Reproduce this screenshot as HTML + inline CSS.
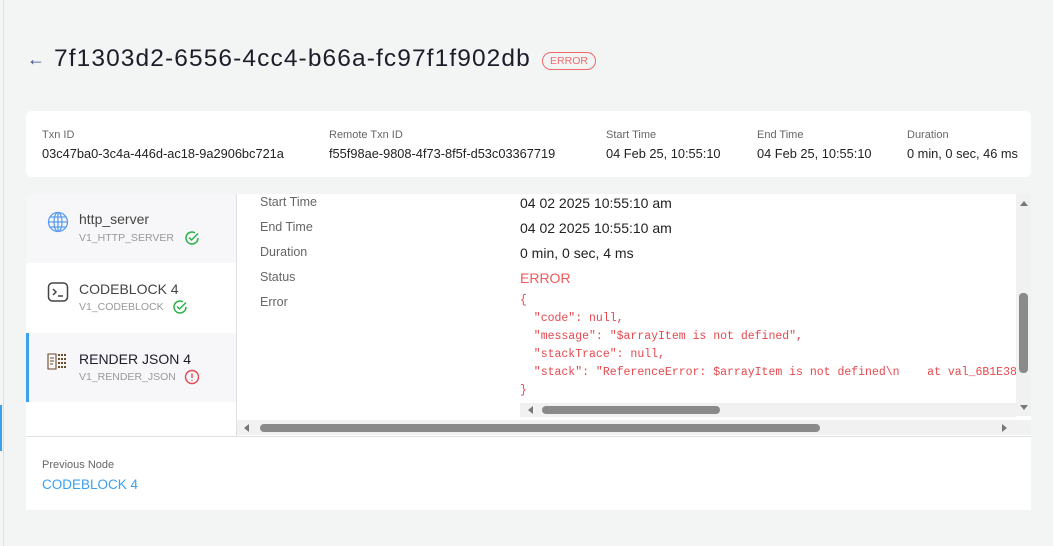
<!DOCTYPE html>
<html><head><style>
*{box-sizing:border-box;margin:0;padding:0}
body{width:1053px;height:546px;background:#f3f4f4;font-family:"Liberation Sans",sans-serif;position:relative;overflow:hidden;color:#222}
.abs{position:absolute}
.lbl{font-size:11px;color:#666}
.val{font-size:12.8px;color:#222}
.mono{font-family:"Liberation Mono",monospace;font-size:11.5px;color:#e5484d;white-space:pre;line-height:18px}
</style></head><body>
<div class="abs" style="left:0;top:0;width:4px;height:546px;border-right:1px solid #e0e0e0;background:#f3f4f4"></div>
<div class="abs" style="left:0;top:405px;width:2px;height:46px;background:#3aa0f0"></div>
<div class="abs" style="left:27px;top:49px;font-size:18px;color:#3a4a8a">←</div>
<div class="abs" style="left:54px;top:45px;font-size:24.5px;letter-spacing:1.1px;color:#1d1d2a">7f1303d2-6556-4cc4-b66a-fc97f1f902db</div>
<div class="abs" style="left:542px;top:52px;width:54px;height:18px;border:1px solid #ef6b6b;border-radius:9px;color:#ef6b6b;font-size:10.5px;text-align:center;line-height:16px">ERROR</div>

<div class="abs" style="left:26px;top:111px;width:1005px;height:66px;background:#fff;border-radius:6px"></div>
<div class="abs lbl" style="left:42px;top:129px">Txn ID</div>
<div class="abs val" style="left:42px;top:146px">03c47ba0-3c4a-446d-ac18-9a2906bc721a</div>
<div class="abs lbl" style="left:329px;top:129px">Remote Txn ID</div>
<div class="abs val" style="left:329px;top:146px">f55f98ae-9808-4f73-8f5f-d53c03367719</div>
<div class="abs lbl" style="left:606px;top:129px">Start Time</div>
<div class="abs val" style="left:606px;top:146px">04 Feb 25, 10:55:10</div>
<div class="abs lbl" style="left:757px;top:129px">End Time</div>
<div class="abs val" style="left:757px;top:146px">04 Feb 25, 10:55:10</div>
<div class="abs lbl" style="left:907px;top:129px">Duration</div>
<div class="abs val" style="left:907px;top:146px">0 min, 0 sec, 46 ms</div>

<div class="abs" style="left:26px;top:194px;width:1005px;height:242px;background:#fff;border-radius:6px 6px 0 0"></div>
<div class="abs" style="left:26px;top:194px;width:210px;height:69px;background:#f7f7f9;border-radius:6px 0 0 0"></div>
<div class="abs" style="left:26px;top:333px;width:210px;height:69px;background:#f7f7f9;border-left:3px solid #3aa0f0"></div>
<div class="abs" style="left:236px;top:194px;width:1px;height:242px;background:#e0e0e0"></div>
<div class="abs" style="left:26px;top:436px;width:1005px;height:1px;background:#e0e0e0"></div>

<svg class="abs" style="left:47px;top:211px" width="22" height="22" viewBox="0 0 22 22" fill="none" stroke="#5b9df0" stroke-width="1.3"><circle cx="11" cy="11" r="9.5"/><ellipse cx="11" cy="11" rx="4" ry="9.5"/><path d="M1.5 11h19M3 6h16M3 16h16M11 1.5v19"/></svg>
<div class="abs" style="left:79px;top:211px;font-size:14px;color:#444">http_server</div>
<div class="abs" style="left:79px;top:232px;font-size:10.5px;color:#999">V1_HTTP_SERVER</div>
<svg class="abs" style="left:184px;top:230px" width="16" height="16" viewBox="0 0 16 16" fill="none" stroke="#2db04a" stroke-width="1.5"><path d="M14 8A6 6 0 1 1 11 2.8"/><path d="M5 7.5l2.5 2.5L14 3.5"/></svg>

<svg class="abs" style="left:47px;top:281px" width="22" height="22" viewBox="0 0 22 22" fill="none" stroke="#444" stroke-width="1.5"><rect x="1.5" y="2" width="19" height="18" rx="4"/><path d="M6 8l3 3-3 3M11 15h5"/></svg>
<div class="abs" style="left:79px;top:281px;font-size:14px;color:#444">CODEBLOCK 4</div>
<div class="abs" style="left:79px;top:301px;font-size:10.5px;color:#999">V1_CODEBLOCK</div>
<svg class="abs" style="left:172px;top:299px" width="16" height="16" viewBox="0 0 16 16" fill="none" stroke="#2db04a" stroke-width="1.5"><path d="M14 8A6 6 0 1 1 11 2.8"/><path d="M5 7.5l2.5 2.5L14 3.5"/></svg>

<svg class="abs" style="left:47px;top:353px" width="22" height="18" viewBox="0 0 22 18" fill="none" stroke="#6b4a2a" stroke-width="1.1"><path d="M1 1h8v15H1zM3 5h4M3 8h4M3 11h3"/><path d="M11 2h2M14 2h2M17 2h2M11 6h2M14 6h2M17 6h2M11 10h2M14 10h2M17 10h2M11 14h2M14 14h2M17 14h2" stroke-width="2"/></svg>
<div class="abs" style="left:79px;top:351px;font-size:14px;color:#1d1d2a">RENDER JSON 4</div>
<div class="abs" style="left:79px;top:371px;font-size:10.5px;color:#999">V1_RENDER_JSON</div>
<svg class="abs" style="left:184px;top:369px" width="16" height="16" viewBox="0 0 16 16" fill="none" stroke="#e5484d" stroke-width="1.4"><circle cx="8" cy="8" r="6.5"/><path d="M8 4.5v4.5M8 10.8v1"/></svg>

<div class="abs" style="left:260px;top:190px;font-size:12.5px;color:#666;line-height:25px">Start Time<br>End Time<br>Duration<br>Status<br>Error</div>
<div class="abs" style="left:520px;top:191px;font-size:14px;color:#222;line-height:25px">04 02 2025 10:55:10 am<br>04 02 2025 10:55:10 am<br>0 min, 0 sec, 4 ms<br><span style="color:#ef5b5b">ERROR</span></div>
<div class="abs mono" style="left:520px;top:292px">{
  "code": null,
  "message": "$arrayItem is not defined",
  "stackTrace": null,
  "stack": "ReferenceError: $arrayItem is not defined\n    at val_6B1E38
}</div>
<div class="abs" style="left:520px;top:403px;width:496px;height:14px;background:#f1f1f1"></div>
<div class="abs" style="left:528px;top:406px;width:0;height:0;border:4px solid transparent;border-right:5px solid #777;border-left:0"></div>
<div class="abs" style="left:542px;top:406px;width:178px;height:8px;border-radius:4px;background:#8a8a8a"></div>
<div class="abs" style="left:1016px;top:194px;width:15px;height:222px;background:#f1f1f1"></div>
<div class="abs" style="left:1020px;top:201px;border:4px solid transparent;border-bottom:5px solid #777;border-top:0"></div>
<div class="abs" style="left:1019px;top:293px;width:9px;height:80px;border-radius:4px;background:#8a8a8a"></div>
<div class="abs" style="left:1020px;top:405px;border:4px solid transparent;border-top:5px solid #777;border-bottom:0"></div>
<div class="abs" style="left:237px;top:420px;width:794px;height:15px;background:#f1f1f1"></div>
<div class="abs" style="left:244px;top:424px;border:4px solid transparent;border-right:5px solid #777;border-left:0"></div>
<div class="abs" style="left:260px;top:424px;width:560px;height:8px;border-radius:4px;background:#8a8a8a"></div>
<div class="abs" style="left:1002px;top:424px;border:4px solid transparent;border-left:5px solid #777;border-right:0"></div>

<div class="abs" style="left:26px;top:437px;width:1005px;height:73px;background:#fff"></div>
<div class="abs lbl" style="left:42px;top:459px">Previous Node</div>
<div class="abs" style="left:42px;top:477px;font-size:13.5px;color:#3aa0f0">CODEBLOCK 4</div>
</body></html>
